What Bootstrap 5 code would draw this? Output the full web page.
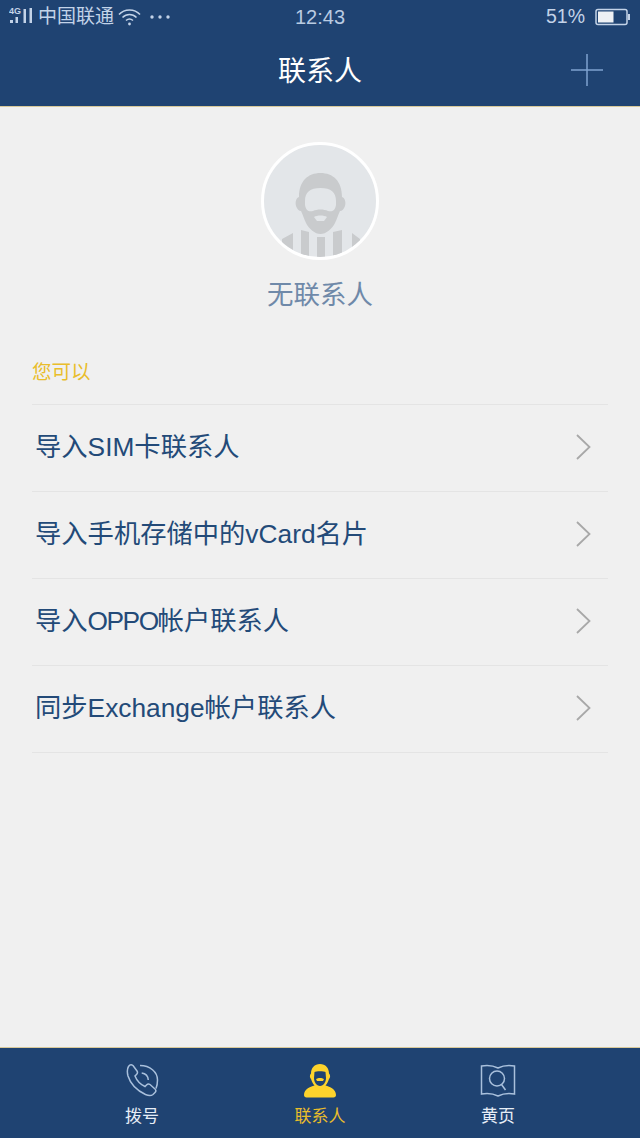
<!DOCTYPE html>
<html lang="zh">
<head>
  <meta charset="utf-8">
  <meta name="viewport" content="width=device-width, initial-scale=1">
  <title>联系人</title>
  <link href="https://cdn.jsdelivr.net/npm/bootstrap@5.3.6/dist/css/bootstrap.min.css" rel="stylesheet">
  <style>
    html, body { height: 100%; }
    body {
      width: 640px; height: 1138px; overflow: hidden;
      background: #f0f0f0;
      font-family: "Liberation Sans", "Noto Sans CJK SC", sans-serif;
    }
    .phone-head { height: 107px; background: #1f4372; border-bottom: 1px solid #d8c99a; flex: none; }
    .status-row { height: 34px; padding: 0 9px; color: #c3d3e8; font-size: 19px; }
    .status-side { width: 230px; }
    .status-time { font-size: 20px; color: #b9cbe2; }
    .dots { width: 20px; height: 4px; }
    .batt-pct { font-size: 19.5px; margin-right: 10px; }
    .title-row { height: 72px; padding-top: 2px; position: relative; }
    .title-text { color: #fff; font-size: 28px; line-height: 72px; }
    .add-icon { position: absolute; right: 37px; top: 20px; }
    .profile-block { padding-top: 35px; }
    .avatar-ring {
      width: 118px; height: 118px; border-radius: 50%;
      border: 3px solid #fff; background: #e3e6e9; overflow: hidden;
    }
    .empty-label { color: #6f89a9; font-size: 26.500px; line-height: 36px; margin-top: 17px; }
    .hint-label { color: #e9bd2b; font-size: 19.500px; line-height: 24px; margin: 47px 32px 20px; }
    .action-list { margin: 0 32px; border-top: 1px solid #e4e4e4; }
    .action-row {
      height: 87px; padding: 0 17px 0 3px;
      border-bottom: 1px solid #e4e4e4;
      color: #234a78; font-size: 26.300px;
    }
    .action-row svg { flex: none; margin-bottom: 2px; }
    .tight-latin { letter-spacing: -1.500px; }
    .tab-bar { height: 91px; background: #1f4372; border-top: 1px solid #d8c99a; flex: none; }
    .tab-item { width: 178px; color: #e6edf6; font-size: 17px; line-height: 20px; }
    .tab-item svg { display: block; margin-bottom: 9px; }
    .tab-on { color: #e9bd2b; }
  </style>
</head>
<body class="d-flex flex-column">
  <header class="phone-head">
    <div class="status-row d-flex align-items-center justify-content-between">
      <div class="status-side d-flex align-items-center gap-1">
        <svg width="25" height="20" viewBox="0 0 25 20" fill="#c3d3e8">
          <text x="0" y="6.500" font-size="9" font-weight="700" font-family="Liberation Sans">4G</text>
          <rect x="1" y="13" width="3" height="3"/>
          <rect x="6.500" y="10" width="2.500" height="6"/>
          <rect x="14.500" y="2" width="2.500" height="14"/>
          <rect x="20.500" y="1" width="2.500" height="15"/>
        </svg>
        <span>中国联通</span>
        <svg width="24" height="20" viewBox="0 0 24 20" fill="none" stroke="#c3d3e8" stroke-width="1.600">
          <path d="M1 7.500C6.500 1.500 16.500 1.500 22 7.500"/>
          <path d="M4.500 10.500C8.500 6.500 14.500 6.500 18.500 10.500"/>
          <path d="M8 13.500C10 11.800 13 11.800 15 13.500"/>
          <circle cx="11.500" cy="17" r="1.400" fill="#c3d3e8" stroke="none"/>
        </svg>
        <svg class="dots ms-1" viewBox="0 0 20 4" fill="#c3d3e8">
          <circle cx="2" cy="2" r="1.700"/><circle cx="10" cy="2" r="1.700"/><circle cx="18" cy="2" r="1.700"/>
        </svg>
      </div>
      <div class="status-time">12:43</div>
      <div class="status-side d-flex align-items-center justify-content-end">
        <span class="batt-pct">51%</span>
        <svg width="36" height="18" viewBox="0 0 36 18">
          <rect x="1" y="1.500" width="31" height="15" rx="2" fill="none" stroke="#c3d3e8" stroke-width="1.500"/>
          <rect x="3" y="3.500" width="15.500" height="11" fill="#eef1f4"/>
          <rect x="33" y="6" width="2" height="6" fill="#c3d3e8"/>
        </svg>
      </div>
    </div>
    <div class="title-row text-center">
      <span class="title-text">联系人</span>
      <svg class="add-icon" width="32" height="32" viewBox="0 0 32 32" stroke="#7fa3d0" stroke-width="1.500">
        <path d="M0 16H32M16 0V32"/>
      </svg>
    </div>
  </header>

  <main class="flex-grow-1">
    <div class="profile-block d-flex flex-column align-items-center">
      <div class="avatar-ring">
        <svg width="112" height="112" viewBox="0 0 112 112">
          <g fill="#c9cbcd">
            <path d="M35 52C35 36 44 28 56.500 28C69 28 78 36 78 52C81 53 82 57 81 61C80 64 78 66 76 66C74 70 73 74 71 78C68 84 62 89 56.500 89C51 89 45 84 42 78C40 74 39 70 37 66C35 66 33 64 32 61C31 57 32 53 35 52Z"/>
            <path d="M18 112V94L29 88V112ZM37 112V85L45 87V112ZM53 112V92H61V112ZM69 112V87L78 85V112ZM88 112V88L96 94V112Z"/>
          </g>
          <path d="M41 56C41 47 46 43 56.500 43C67 43 72 47 72 56V60C71 66 68 67 64 66C60 64 53 64 49 66C45 67 42 66 41 60Z" fill="#e3e6e9"/>
          <path d="M50 72C53 70 60 70 63 72L60 76H53Z" fill="#e3e6e9"/>
        </svg>
      </div>
      <div class="empty-label">无联系人</div>
    </div>

    <div class="hint-label">您可以</div>

    <div class="action-list">
      <div class="action-row d-flex align-items-center justify-content-between">
        <span>导入SIM卡联系人</span>
        <svg width="15" height="26" viewBox="0 0 15 26" fill="none" stroke="#a8a8a8" stroke-width="1.800"><path d="M1 1L13.500 13L1 25"/></svg>
      </div>
      <div class="action-row d-flex align-items-center justify-content-between">
        <span>导入手机存储中的vCard名片</span>
        <svg width="15" height="26" viewBox="0 0 15 26" fill="none" stroke="#a8a8a8" stroke-width="1.800"><path d="M1 1L13.500 13L1 25"/></svg>
      </div>
      <div class="action-row d-flex align-items-center justify-content-between">
        <span>导入<span class="tight-latin">OPPO</span>帐户联系人</span>
        <svg width="15" height="26" viewBox="0 0 15 26" fill="none" stroke="#a8a8a8" stroke-width="1.800"><path d="M1 1L13.500 13L1 25"/></svg>
      </div>
      <div class="action-row d-flex align-items-center justify-content-between">
        <span>同步Exchange帐户联系人</span>
        <svg width="15" height="26" viewBox="0 0 15 26" fill="none" stroke="#a8a8a8" stroke-width="1.800"><path d="M1 1L13.500 13L1 25"/></svg>
      </div>
    </div>
  </main>

  <nav class="tab-bar d-flex justify-content-center align-items-start pt-3">
    <div class="tab-item d-flex flex-column align-items-center">
      <svg width="34" height="34" viewBox="0 0 34 34" fill="none" stroke="#a9c0dc" stroke-width="1.500">
        <path d="M3.500 2.500C4.500 1 6.500 .5 8 1.500L12 7C12.800 8.200 12.500 9.500 11.500 10.500L10 12C12 17 15.500 20.500 20 22.500L21.500 21C22.500 20 24 19.800 25 20.500L30 25C31 26 31 27.500 30 28.500L28 30.500C26 32 23.500 31.800 20.500 30.500C11 26 5.500 20 3 12C2 8 2 5 3.500 2.500Z"/>
        <path d="M16.700 9C20.500 9.500 23 12 23.300 16"/>
        <path d="M15 1.500C25 1.500 32.500 8 32.500 16C32.500 19 32 22 31 24.500"/>
      </svg>
      <span>拨号</span>
    </div>
    <div class="tab-item tab-on d-flex flex-column align-items-center">
      <svg width="36" height="34" viewBox="0 0 36 34">
        <path d="M18 0C23.500 0 27 4 27 9.500C28.500 10.500 28.500 14 27 15C26 18 25 20 23.500 21.500C28 23 34 25 34 31C34 32.500 33 33.500 31.500 33.500H4.500C3 33.500 2 32.500 2 31C2 25 8 23 12.500 21.500C11 20 10 18 9 15C7.500 14 7.500 10.500 9 9.500C9 4 12.500 0 18 0Z" fill="#fdd32c"/>
        <path d="M12.500 8C14 7 22 7 23.500 8L24 14C24 18 21.500 22 18 22C14.500 22 12 18 12 14Z" fill="#1f4372"/>
        <path d="M14 15C16 13.500 20 13.500 22 15L21 17H15Z" fill="#fdd32c"/>
      </svg>
      <span>联系人</span>
    </div>
    <div class="tab-item d-flex flex-column align-items-center">
      <svg width="36" height="34" viewBox="0 0 36 34" fill="none" stroke="#a9c0dc" stroke-width="1.500">
        <path d="M1.500 2C7 1 13 1.500 18 4C23 1.500 29 1 34.500 2V30C29 29 23 29.500 18 32C13 29.500 7 29 1.500 30Z"/>
        <circle cx="17" cy="14.500" r="7.500"/>
        <path d="M21.500 20.500L25.500 26"/>
      </svg>
      <span>黄页</span>
    </div>
  </nav>
</body>
</html>
